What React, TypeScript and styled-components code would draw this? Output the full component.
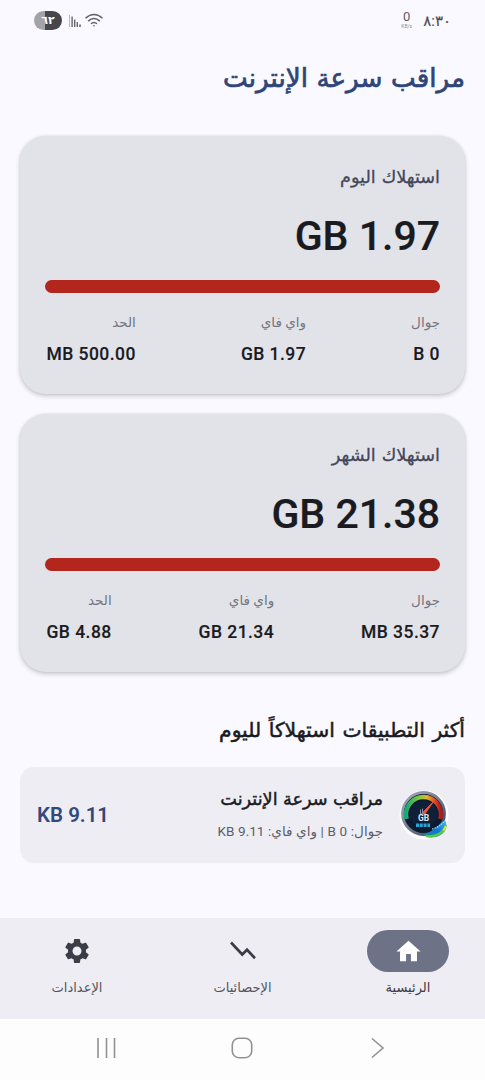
import React from "react";
import styled, { createGlobalStyle } from "styled-components";

const GlobalStyle = createGlobalStyle`
  *, *::before, *::after { box-sizing: border-box; }
  body {
    margin: 0;
    background: #faf9ff;
    font-family: Roboto, "DejaVu Sans", sans-serif;
    color: #1a1b21;
  }
`;

const Screen = styled.div`
  width: 485px;
  height: 1080px;
  display: flex;
  flex-direction: column;
  overflow: hidden;
  background: #faf9ff;
`;

const StatusBar = styled.header`
  height: 42px;
  flex: none;
  display: flex;
  justify-content: space-between;
  align-items: center;
  padding: 0 34px 1px;
  color: #5b5c62;
`;

const StatusGroup = styled.div`
  display: flex;
  align-items: center;
`;

const Battery = styled.span`
  width: 28px;
  height: 19px;
  border-radius: 10px;
  background: linear-gradient(90deg, #a2a2a7 0 39%, #47474b 39%);
  color: #fff;
  font-size: 11px;
  font-weight: 700;
  line-height: 19px;
  text-align: center;
  margin-right: 7px;
`;

const NetSpeed = styled.span`
  display: flex;
  flex-direction: column;
  align-items: center;
  font-size: 13px;
  line-height: 12px;
  margin: 0 11px 0 0;
`;

const NetUnit = styled.span`
  font-size: 5px;
  line-height: 7px;
  color: #8d8d93;
`;

const Clock = styled.span`
  font-size: 15px;
  line-height: 20px;
  color: #4f5056;
  -webkit-text-stroke: 0.2px currentColor;
`;

const Main = styled.main`
  flex: 1;
  min-height: 0;
  padding: 0 20px;
  display: flex;
  flex-direction: column;
`;

const Title = styled.h1`
  margin: 0;
  height: 94px;
  flex: none;
  line-height: 72px;
  font-size: 26.2px;
  font-weight: 400;
  word-spacing: 2px;
  -webkit-text-stroke: 0.7px currentColor;
  color: #2f4578;
  white-space: nowrap;
`;

const Card = styled.section`
  height: 258px;
  flex: none;
  margin-bottom: 20px;
  padding: 27px 25px 0;
  border-radius: 26px;
  background: #e2e2e9;
  box-shadow: 0 2px 5px rgba(0, 0, 0, 0.2), 0 0 3px rgba(0, 0, 0, 0.08);
`;

const CardTitle = styled.h2`
  margin: 0;
  font-size: 17.7px;
  line-height: 28px;
  font-weight: 400;
  word-spacing: 1.5px;
  -webkit-text-stroke: 0.3px currentColor;
  color: #44475a;
`;

const Total = styled.div`
  margin-top: 14px;
  font-size: 41px;
  line-height: 62px;
  font-weight: 500;
  white-space: nowrap;
  -webkit-text-stroke: 0.2px currentColor;
`;

const Track = styled.div`
  margin-top: 13px;
  height: 13px;
  border-radius: 7px;
  background: #b3261e;
`;

const Stats = styled.div`
  display: flex;
  justify-content: space-between;
  margin-top: 16px;
  padding-left: 1.5px;
`;

const Label = styled.div`
  font-size: 13.5px;
  line-height: 26px;
  color: #74767f;
`;

const Value = styled.div`
  margin-top: 6px;
  font-size: 17.5px;
  line-height: 26px;
  font-weight: 500;
  letter-spacing: 0.45px;
  white-space: nowrap;
  -webkit-text-stroke: 0.15px currentColor;
`;

const SectionTitle = styled.h2`
  margin: 16px 0 0;
  height: 59px;
  flex: none;
  font-size: 20.3px;
  line-height: 44px;
  font-weight: 400;
  word-spacing: 2.6px;
  -webkit-text-stroke: 0.5px currentColor;
  white-space: nowrap;
`;

const AppRow = styled.div`
  height: 96px;
  flex: none;
  display: flex;
  align-items: center;
  padding: 0 16px 0 17px;
  border-radius: 14px;
  background: #eeedf4;
`;

const AppText = styled.div`
  flex: 1;
  margin-right: 16px;
`;

const AppName = styled.div`
  font-size: 17.7px;
  line-height: 32px;
  word-spacing: 1px;
  -webkit-text-stroke: 0.45px currentColor;
`;

const AppDetail = styled.div`
  font-size: 13.5px;
  line-height: 32px;
  word-spacing: 0.3px;
  color: #5d5f68;
  white-space: nowrap;
`;

const AppUsage = styled.div`
  font-size: 20.5px;
  font-weight: 600;
  color: #34487a;
  white-space: nowrap;
`;

const TabBar = styled.nav`
  height: 101px;
  flex: none;
  display: flex;
  justify-content: space-between;
  padding: 12px 36px 0;
  background: #eeedf4;
`;

const Tab = styled.div`
  width: 82px;
  display: flex;
  flex-direction: column;
  align-items: center;
`;

const TabIcon = styled.div<{ $active?: boolean }>`
  width: 82px;
  height: 42px;
  border-radius: 21px;
  display: flex;
  align-items: center;
  justify-content: center;
  background: ${(p) => (p.$active ? "#6d7287" : "transparent")};
  color: ${(p) => (p.$active ? "#fff" : "#3b3c46")};
`;

const TabLabel = styled.div<{ $active?: boolean }>`
  font-size: 13px;
  line-height: 31px;
  white-space: nowrap;
  color: ${(p) => (p.$active ? "#3a3b43" : "#55565f")};
`;

const SystemBar = styled.footer`
  height: 61px;
  flex: none;
  display: flex;
  justify-content: space-between;
  align-items: center;
  padding: 0 97px 3px 96px;
  background: #fdfdfd;
`;

const GaugeIcon = () => (
  <svg width="50" height="50" viewBox="0 0 50 50">
    <defs>
      <linearGradient id="arc" x1="0" x2="1" y1="0" y2="0">
        <stop offset="0" stopColor="#19a878" />
        <stop offset="0.35" stopColor="#76c93a" />
        <stop offset="0.6" stopColor="#e9b32e" />
        <stop offset="0.85" stopColor="#dd3b24" />
        <stop offset="1" stopColor="#a11f1c" />
      </linearGradient>
      <linearGradient id="rim" x1="0" x2="1" y1="0" y2="1">
        <stop offset="0" stopColor="#a5abb9" />
        <stop offset="0.5" stopColor="#747c90" />
        <stop offset="1" stopColor="#2d3c5c" />
      </linearGradient>
      <linearGradient id="swoosh" x1="0" x2="1" y1="1" y2="0">
        <stop offset="0" stopColor="#118d8c" />
        <stop offset="0.5" stopColor="#1474e0" />
        <stop offset="1" stopColor="#3fb7e8" />
      </linearGradient>
    </defs>
    <circle cx="25" cy="25" r="24.5" fill="#fff" />
    <circle cx="24.5" cy="23.5" r="21" fill="#0d1a30" stroke="url(#rim)" strokeWidth="2.8" />
    <path d="M7.6 29 A17.5 17.5 0 1 1 41.4 29" fill="none" stroke="url(#arc)" strokeWidth="4.5" />
    <circle cx="24.5" cy="24" r="13.5" fill="#0f2038" />
    <path d="M22.5 23.5 L35 11 L25.5 24.5 Z" fill="#f0553c" stroke="#f0553c" strokeWidth="0.8" />
    <path d="M21.5 19.5V24M23.5 18.5V24" stroke="#7d8ba3" strokeWidth="1" />
    <text x="24.5" y="31" textAnchor="middle" fontSize="8.5" fontWeight="700" fill="#dfe6ef">GB</text>
    <path d="M17 35.2 H31" stroke="#27a5d6" strokeWidth="3.4" strokeDasharray="3 0.8" />
    <path d="M24 44 C33 43 38 36 46 30 C50 38 45 45.5 36 47 C31 48 27 47 24 44 Z" fill="url(#swoosh)" />
    <path d="M33 39 C38 38 42 35 46 31" fill="none" stroke="#8fe3ff" strokeWidth="1.2" strokeDasharray="1.5 1" />
    <path d="M27 46 C36 47.5 44 44 47 35" fill="none" stroke="#52ce3c" strokeWidth="2.4" />
    <path d="M44.5 40.5 L47 36" stroke="#d6e04a" strokeWidth="2" />
  </svg>
);

const HomeIcon = () => (
  <svg width="29" height="29" viewBox="0 0 24 24" fill="currentColor">
    <path d="M10 20v-6h4v6h5v-8h3L12 3 2 12h3v8z" />
  </svg>
);

const TrendIcon = () => (
  <svg width="30" height="30" viewBox="0 0 24 24" fill="none" stroke="currentColor" strokeWidth="2.1">
    <path d="M2.4 5.2 L11.4 14.8 L15.2 11 L21.6 17.8" />
  </svg>
);

const SettingsIcon = () => (
  <svg width="30" height="30" viewBox="0 0 24 24" fill="currentColor">
    <path d="M19.14 12.94c.04-.3.06-.61.06-.94 0-.32-.02-.64-.07-.94l2.03-1.58c.18-.14.23-.41.12-.61l-1.92-3.32c-.12-.22-.37-.29-.59-.22l-2.39.96c-.5-.38-1.03-.7-1.62-.94l-.36-2.54c-.04-.24-.24-.41-.48-.41h-3.84c-.24 0-.43.17-.47.41l-.36 2.54c-.59.24-1.13.57-1.62.94l-2.39-.96c-.22-.08-.47 0-.59.22L2.74 8.87c-.12.21-.08.47.12.61l2.03 1.58c-.05.3-.09.63-.09.94s.02.64.07.94l-2.03 1.58c-.18.14-.23.41-.12.61l1.92 3.32c.12.22.37.29.59.22l2.39-.96c.5.38 1.03.7 1.62.94l.36 2.54c.05.24.24.41.48.41h3.84c.24 0 .44-.17.47-.41l.36-2.54c.59-.24 1.13-.56 1.62-.94l2.39.96c.22.08.47 0 .59-.22l1.92-3.32c.12-.22.07-.47-.12-.61l-2.01-1.58zM12 15.6c-1.98 0-3.6-1.62-3.6-3.6s1.62-3.6 3.6-3.6 3.6 1.62 3.6 3.6-1.62 3.6-3.6 3.6z" />
  </svg>
);

const SignalIcon = () => (
  <svg width="15" height="14" viewBox="0 0 15 14" fill="#66676c">
    <rect x="0" y="1" width="1" height="12" fill="#b5b5bb" />
    <rect x="2.4" y="2.5" width="1.4" height="10.5" />
    <rect x="5" y="5.5" width="1.4" height="7.5" />
    <rect x="7.6" y="8" width="1.4" height="5" />
    <rect x="10.2" y="10.5" width="1.6" height="2.5" />
  </svg>
);

const WifiIcon = () => (
  <svg width="20" height="15" viewBox="0 0 20 15" fill="none" stroke="#5f6065" strokeWidth="1.5">
    <path d="M1.5 5.2 Q10 -2.2 18.5 5.2" />
    <path d="M4.2 8.1 Q10 3 15.8 8.1" />
    <path d="M7 10.8 Q10 8.2 13 10.8" />
    <circle cx="10" cy="12.8" r="0.8" fill="#5f6065" stroke="none" />
  </svg>
);

type Stat = { label: string; value: string };

const UsageCard = ({ title, total, stats }: { title: string; total: string; stats: Stat[] }) => (
  <Card>
    <CardTitle>{title}</CardTitle>
    <Total>{total}</Total>
    <Track />
    <Stats>
      {stats.map((s) => (
        <div key={s.label}>
          <Label>{s.label}</Label>
          <Value>{s.value}</Value>
        </div>
      ))}
    </Stats>
  </Card>
);

export default function App() {
  return (
    <Screen dir="rtl">
      <GlobalStyle />
      <StatusBar dir="ltr">
        <StatusGroup>
          <Battery>٦٢</Battery>
          <SignalIcon />
          <WifiIcon />
        </StatusGroup>
        <StatusGroup>
          <NetSpeed>
            <span>0</span>
            <NetUnit>KB/s</NetUnit>
          </NetSpeed>
          <Clock>٨:٣٠</Clock>
        </StatusGroup>
      </StatusBar>
      <Main>
        <Title>مراقب سرعة الإنترنت</Title>
        <UsageCard
          title="استهلاك اليوم"
          total="1.97 GB"
          stats={[
            { label: "جوال", value: "0 B" },
            { label: "واي فاي", value: "1.97 GB" },
            { label: "الحد", value: "500.00 MB" },
          ]}
        />
        <UsageCard
          title="استهلاك الشهر"
          total="21.38 GB"
          stats={[
            { label: "جوال", value: "35.37 MB" },
            { label: "واي فاي", value: "21.34 GB" },
            { label: "الحد", value: "4.88 GB" },
          ]}
        />
        <SectionTitle>أكثر التطبيقات استهلاكاً لليوم</SectionTitle>
        <AppRow>
          <GaugeIcon />
          <AppText>
            <AppName>مراقب سرعة الإنترنت</AppName>
            <AppDetail>جوال: 0 B | واي فاي: 9.11 KB</AppDetail>
          </AppText>
          <AppUsage>9.11 KB</AppUsage>
        </AppRow>
      </Main>
      <TabBar>
        <Tab>
          <TabIcon $active>
            <HomeIcon />
          </TabIcon>
          <TabLabel $active>الرئيسية</TabLabel>
        </Tab>
        <Tab>
          <TabIcon>
            <TrendIcon />
          </TabIcon>
          <TabLabel>الإحصائيات</TabLabel>
        </Tab>
        <Tab>
          <TabIcon>
            <SettingsIcon />
          </TabIcon>
          <TabLabel>الإعدادات</TabLabel>
        </Tab>
      </TabBar>
      <SystemBar dir="ltr">
        <svg width="21" height="22" viewBox="0 0 21 22" stroke="#929294" strokeWidth="1.6">
          <path d="M2 1V21M10.5 1V21M18.5 1V21" />
        </svg>
        <svg width="22" height="22" viewBox="0 0 22 22" fill="none" stroke="#929294" strokeWidth="1.6">
          <rect x="1.3" y="1.3" width="19.4" height="19.4" rx="6.5" />
        </svg>
        <svg width="21" height="22" viewBox="0 0 21 22" fill="none" stroke="#929294" strokeWidth="1.6">
          <path d="M5 1.5L16 11L5 20.5" />
        </svg>
      </SystemBar>
    </Screen>
  );
}
